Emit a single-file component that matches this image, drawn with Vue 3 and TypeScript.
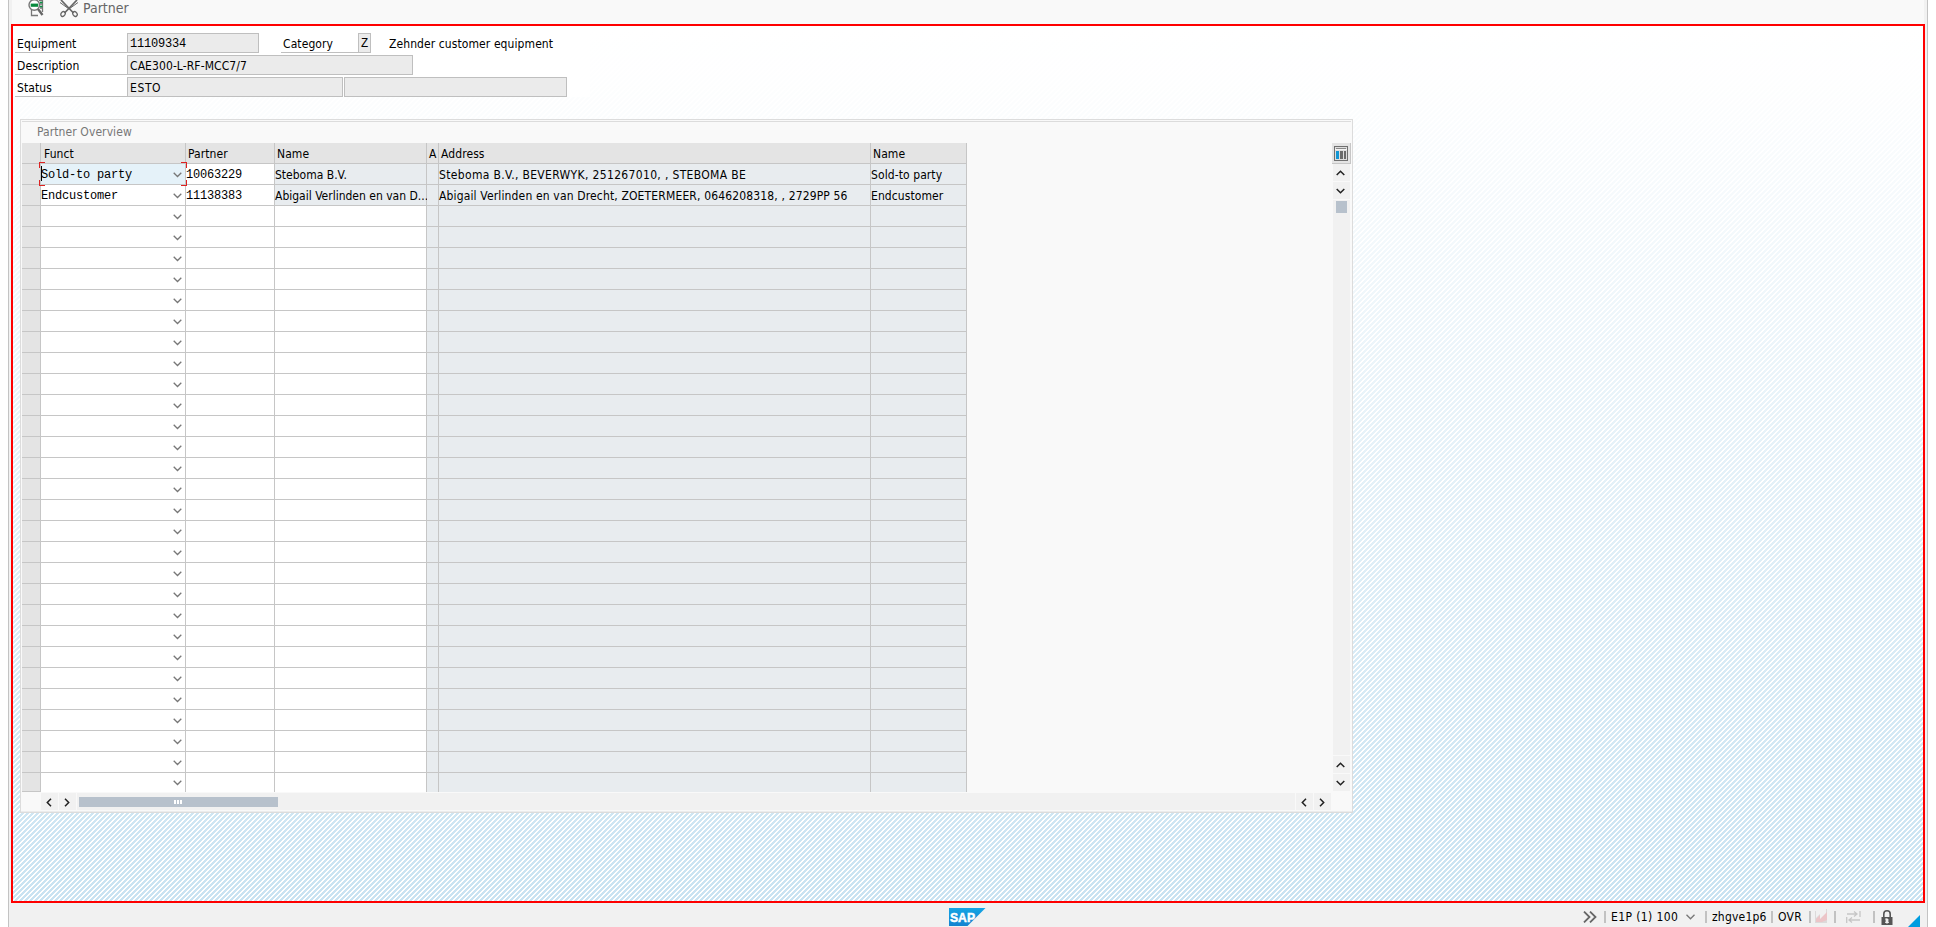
<script setup lang="ts">
interface PartnerRow {
  funct: string
  partner: string
  name: string
  address: string
  role: string
}

const filled: PartnerRow[] = [
  { funct: 'Sold-to party', partner: '10063229', name: 'Steboma B.V.', address: 'Steboma B.V., BEVERWYK, 251267010, , STEBOMA BE', role: 'Sold-to party' },
  { funct: 'Endcustomer', partner: '11138383', name: 'Abigail Verlinden en van D...', address: 'Abigail Verlinden en van Drecht, ZOETERMEER, 0646208318, , 2729PP 56', role: 'Endcustomer' },
]
const blank: PartnerRow = { funct: '', partner: '', name: '', address: '', role: '' }
const rows: PartnerRow[] = Array.from({ length: 30 }, (_, i) => filled[i] ?? blank)
</script>

<template>
  <div class="window">
    <header class="toolbar">
      <svg class="tool-find" width="18" height="18" viewBox="0 0 18 18" fill="none">
        <path d="M3.500 9.500V15.500H10M14.500 0V12M11 .5h4M12 4h3M12 8h3" stroke="#777" stroke-width="1.300" />
        <path d="M12 2.500h2.500M12 6.500h2.500" stroke="#0a9245" stroke-width="1.500" />
        <circle cx="6.300" cy="5" r="5.300" fill="#fff" stroke="#777" stroke-width="1.400" />
        <path d="M2.700 5.200h7.500" stroke="#078a3d" stroke-width="3.200" />
        <path d="M10 9l4.500 6" stroke="#666" stroke-width="2.400" />
      </svg>
      <svg class="tool-partner" width="18" height="18" viewBox="0 0 18 18" fill="none" stroke="#666">
        <path d="M1 0l12.500 13M17 0L4.500 13" stroke-width="1.700" />
        <path d="M0 2.500l9 6.500 9-6.500" stroke-width="1" />
        <ellipse cx="3" cy="14" rx="2" ry="2.600" transform="rotate(35 3 14)" stroke-width="1.300" />
        <ellipse cx="15" cy="14" rx="2" ry="2.600" transform="rotate(-35 15 14)" stroke-width="1.300" />
      </svg>
      <span>Partner</span>
    </header>

    <main class="canvas">
      <svg class="stripes" width="1910" height="875" shape-rendering="crispEdges">
        <defs>
          <pattern id="hatch" width="5" height="5" patternUnits="userSpaceOnUse">
            <path d="M0 0h3v1h-3zM0 1h2v1h-2zM4 1h1v1h-1zM0 2h1v1h-1zM3 2h2v1h-2zM2 3h3v1h-3zM1 4h3v1h-3z" fill="#c9e3f2" />
          </pattern>
          <linearGradient id="fade" x1="0" y1="0" x2="0" y2="1">
            <stop offset="0" stop-color="#fff" />
            <stop offset=".06" stop-color="#fff" stop-opacity=".97" />
            <stop offset="1" stop-color="#fff" stop-opacity="0" />
          </linearGradient>
        </defs>
        <rect width="1910" height="875" fill="url(#hatch)" />
        <rect width="1910" height="875" fill="url(#fade)" />
      </svg>

      <section class="form">
        <div class="line">
          <label class="lab">Equipment</label>
          <div class="field equip mono">11109334</div>
          <label class="lab cat">Category</label>
          <div class="field z mono">Z</div>
          <span class="cat-text">Zehnder customer equipment</span>
        </div>
        <div class="line">
          <label class="lab">Description</label>
          <div class="field desc">CAE300-L-RF-MCC7/7</div>
        </div>
        <div class="line">
          <label class="lab">Status</label>
          <div class="field stat">ESTO</div>
          <div class="field stat2"></div>
        </div>
      </section>

      <section class="panel">
        <h2>Partner Overview</h2>
        <div class="body">
          <div class="grid">
            <div class="row head">
              <div class="sel"></div>
              <div class="first">Funct</div><div>Partner</div><div>Name</div><div>A</div><div>Address</div><div>Name</div>
            </div>
            <div v-for="(r, i) in rows" :key="i" class="row" :class="{ filled: i < 2, active: i === 0, last: i === 29 }">
              <div class="sel"></div>
              <div class="mono funct">
                <span>{{ r.funct }}</span>
                <svg class="arrow" width="9" height="6" viewBox="0 0 9 6"><path d="M.7.8L4.500 4.500 8.300.8" fill="none" stroke="#777" stroke-width="1.300" /></svg>
                <template v-if="i === 0">
                  <i class="caret"></i>
                  <i class="corner tl"></i><i class="corner tr"></i><i class="corner bl"></i><i class="corner br"></i>
                </template>
              </div>
              <div class="mono">{{ r.partner }}</div>
              <div class="name">{{ r.name }}</div>
              <div class="ro"></div>
              <div class="ro address">{{ r.address }}</div>
              <div class="ro role">{{ r.role }}</div>
            </div>
          </div>
          <div class="vscroll">
            <div class="config">
              <svg width="15" height="15" viewBox="0 0 15 15" shape-rendering="crispEdges">
                <path d="M1 0h14v15H1z" fill="#707070" /><path d="M2 1h12v13H2z" fill="#dedede" />
                <path d="M3 2h10v1H3z" fill="#8a8a8a" />
                <path d="M3 5h3v8H3z" fill="#1296d4" /><path d="M7 5h3v8H7zM11 5h2v8h-2z" fill="#6b6b6b" />
                <path d="M2 3h12v1H2z" fill="#f4f4f4" />
              </svg>
            </div>
            <div class="btn"><svg width="9" height="6" viewBox="0 0 9 6"><path d="M.7 5L4.500 1.300 8.300 5" /></svg></div>
            <div class="btn"><svg width="9" height="6" viewBox="0 0 9 6"><path d="M.7 1L4.500 4.700 8.300 1" /></svg></div>
            <div class="track"><div class="thumb"></div></div>
            <div class="btn"><svg width="9" height="6" viewBox="0 0 9 6"><path d="M.7 5L4.500 1.300 8.300 5" /></svg></div>
            <div class="btn"><svg width="9" height="6" viewBox="0 0 9 6"><path d="M.7 1L4.500 4.700 8.300 1" /></svg></div>
          </div>
        </div>
        <div class="hscroll">
          <div class="btn"><svg width="6" height="9" viewBox="0 0 6 9"><path d="M5 .7L1.300 4.500 5 8.300" /></svg></div>
          <div class="btn"><svg width="6" height="9" viewBox="0 0 6 9"><path d="M1 .7L4.700 4.500 1 8.300" /></svg></div>
          <div class="track"><div class="thumb"><i></i><i></i><i></i></div></div>
          <div class="btn"><svg width="6" height="9" viewBox="0 0 6 9"><path d="M5 .7L1.300 4.500 5 8.300" /></svg></div>
          <div class="btn"><svg width="6" height="9" viewBox="0 0 6 9"><path d="M1 .7L4.700 4.500 1 8.300" /></svg></div>
        </div>
      </section>
    </main>

    <footer class="status">
      <svg class="sap" width="37" height="18" viewBox="0 0 37 18">
        <defs><linearGradient id="sapblue" x2="0" y2="1"><stop stop-color="#13a5e4" /><stop offset="1" stop-color="#1583d0" /></linearGradient></defs>
        <path d="M0 0h36.500L18.500 18H0z" fill="url(#sapblue)" />
        <text x="1" y="13.500" textLength="25" lengthAdjust="spacingAndGlyphs">SAP</text>
      </svg>
      <div class="right">
        <svg class="more" width="14" height="12" viewBox="0 0 14 12" fill="none" stroke="#666" stroke-width="1.800"><path d="M1 .6L6.500 6 1 11.400M7 .6L12.500 6 7 11.400" /></svg>
        <b></b>
        <span class="sys">E1P (1) 100</span>
        <svg class="down" width="9" height="6" viewBox="0 0 9 6" fill="none" stroke="#777" stroke-width="1.300"><path d="M.5.800L4.500 4.800 8.500.8" /></svg>
        <b></b>
        <span class="host">zhgve1p6</span>
        <b></b>
        <span class="ovr">OVR</span>
        <b></b>
        <svg class="perf" width="13" height="14" viewBox="0 0 13 14"><path d="M0 2v12h12V0h-1v10L5 13V5L1 9V2z" fill="#dcdada" /><path d="M1 10l4-4v4l7-7v8l-5 2H1z" fill="#ecc5c8" /></svg>
        <b></b>
        <svg class="swap" width="15" height="12" viewBox="0 0 15 12" fill="none" stroke="#c6c6c6" stroke-width="1.300"><path d="M1 3h10M8 .5L11 3 8 5.500M14 0v6M14 9H3M6 6.500L3 9l3 2.500M.700 6v6" /></svg>
        <b></b>
        <svg class="lock" width="12" height="15" viewBox="0 0 12 15"><path d="M2.800 8V4a3.200 3.200 0 016.400 0V8" fill="none" stroke="#555" stroke-width="1.600" /><path d="M.500 7h11v8H.5z" fill="#555" /><path d="M5 9h2v4H5zM4 9h2M4 12.500h4" fill="#eee" stroke="#eee" stroke-width=".8" /></svg>
        <svg class="grip" width="13" height="13" viewBox="0 0 13 13"><path d="M13 0v13H0z" fill="#009de0" /></svg>
      </div>
    </footer>
  </div>
</template>

<style>
body { margin: 0; background: #fff; overflow: hidden; }
</style>

<style scoped>
* { box-sizing: border-box; }
.window {
  width: 1920px; height: 927px; margin-left: 8px;
  border-left: 1px solid #c3c3c3; border-right: 1px solid #c3c3c3;
  background: #f1f1f1; display: flex; flex-direction: column;
  font: 12px/14px "DejaVu Sans Condensed", "Noto Sans", sans-serif; color: #000;
  letter-spacing: 0.09px;
  white-space: nowrap;
}
.mono { font-family: "Liberation Mono", monospace; letter-spacing: -0.2px; }
.toolbar { height: 24px; margin: 0 3px; background: #f9f9f9; display: flex; color: #666; font-size: 14px; letter-spacing: 0; }
.tool-find { margin-left: 16px; }
.tool-partner { margin-left: 14px; }
.toolbar span { margin-left: 5px; line-height: 16px; }
.canvas { position: relative; width: 1914px; height: 879px; margin-left: 2px; border: 2px solid #f00; background: #fff; display: flex; flex-direction: column; flex: none; }
.stripes { position: absolute; left: 0; top: 0; }
.form { position: relative; background: #fff; width: 577px; height: 71px; padding: 7px 0 0 2px; display: flex; flex-direction: column; gap: 2px; }
.line { display: flex; height: 20px; }
.lab { width: 112px; border-bottom: 1px solid #bfbfbf; padding: 4px 0 0 2px; }
.field { height: 20px; border: 1px solid #bfbfbf; background: #ebebeb; padding: 3px 2px; }
.equip { width: 132px; }
.cat { width: 77px; margin-left: 22px; }
.z { width: 13px; }
.cat-text { margin-left: 18px; padding-top: 4px; }
.desc { width: 286px; }
.stat { width: 216px; letter-spacing: 0.6px; }
.stat2 { width: 223px; margin-left: 1px; }
.panel { position: relative; width: 1333px; height: 694px; margin: 22px 0 0 7px; background: #f9f9f9; border: 1px solid #dcdcdc; padding: 1px 0 0 1px; box-shadow: inset 0 -1px #ececec; }
h2 { margin: 0; height: 22px; width: 1329px; border-top: 1px solid #dcdcdc; padding: 3px 0 0 15px; font: inherit; color: #777; }
.body { display: flex; justify-content: space-between; width: 1329px; height: 649px; }
.grid { width: 945px; }
.row { display: grid; grid-template-columns: 19px 145px 89px 152px 12px 432px 96px; height: 21px; }
.row > div { position: relative; background: #fff; border-right: 1px solid #c6c6c6; border-bottom: 1px solid #c6c6c6; padding: 4px 0 0; min-width: 0; height: 21px; }
.row > .ro, .filled > .name { background: #e8ecef; }
.filled > .name { letter-spacing: 0; }
.row > .sel, .head > div { background: #e4e4e4; }
.row.head > div { padding-left: 2px; }
.row.head > .first { padding-left: 3px; }
.filled .address { letter-spacing: 0.15px; }
.active .address { letter-spacing: 0.34px; }
.row.last, .row.last > div { height: 19px; }
.row.last > div { border-bottom: 0; }
.row.last > .sel { border-bottom: 1px solid #c6c6c6; }
.row > .funct { display: flex; justify-content: space-between; padding-right: 3px; }
.arrow { margin-top: 4px; }
.last .arrow { margin-top: 3px; }
.active > .funct { background: #e5f2f9; z-index: 1; }
.caret { position: absolute; left: 0; top: 2px; width: 1px; height: 15px; background: #000; }
.corner { position: absolute; width: 6px; height: 6px; border: 0 solid #d22; }
.tl { left: -2px; top: -2px; border-width: 1px 0 0 1px; }
.tr { right: -2px; top: -2px; border-width: 1px 1px 0 0; }
.bl { left: -2px; bottom: -2px; border-width: 0 0 1px 1px; }
.br { right: -2px; bottom: -2px; border-width: 0 1px 1px 0; }
.vscroll { width: 19px; height: 648px; padding-right: 1px; display: flex; flex-direction: column; align-items: flex-end; gap: 1px; }
.config { width: 19px; height: 21px; margin: 0 -1px -1px 0; background: #e4e4e4; border-right: 1px solid #c6c6c6; border-bottom: 1px solid #c6c6c6; padding: 3px 0 0 1px; }
.config svg { display: block; }
.btn { width: 17px; height: 17px; flex: none; background: #f1f1f1; display: flex; align-items: center; justify-content: center; }
.btn path { fill: none; stroke: #222; stroke-width: 1.5; }
.vscroll .btn svg { margin-right: 2px; }
.track { background: #f1f1f1; flex: 1; }
.vscroll .track { width: 17px; padding: 1px 3px; }
.vscroll .thumb { width: 11px; height: 12px; background: #b7c1cc; }
.hscroll { display: flex; gap: 1px; height: 17px; width: 1290px; margin: 1px 0 0 19px; }
.hscroll .btn { padding: 1px 2px 0 0; }
.hscroll .track { padding: 4px 2px; }
.hscroll .thumb { width: 199px; height: 10px; background: #b7c1cc; display: flex; gap: 1px; justify-content: center; align-items: center; padding-right: 2px; }
.thumb i { width: 2px; height: 4px; background: #fff; }
.status { height: 24px; display: flex; justify-content: space-between; }
.sap { margin: 5px 0 0 940px; }
.sap text { font: bold 13px "Liberation Sans", sans-serif; fill: #fff; stroke: #fff; stroke-width: .5px; letter-spacing: 0; }
.right { display: flex; align-items: center; height: 28px; width: 344px; }
.right b { width: 2px; height: 12px; background: #c2c2c2; flex: none; }
.right svg { flex: none; }
.more { margin-right: 7px; }
.sys { width: 80px; padding-left: 5px; letter-spacing: 0.4px; flex: none; }
.down { margin: 0 10px 0 0; }
.host { width: 64px; padding-left: 5px; letter-spacing: 0.2px; }
.ovr { width: 36px; padding-left: 5px; letter-spacing: 0.3px; }
.perf { margin: 0 6px 3px 4px; }
.swap { margin: 0 12px 0 10px; }
.lock { margin: 0 14px 0 6px; }
.grip { margin-top: 9px; }
</style>
